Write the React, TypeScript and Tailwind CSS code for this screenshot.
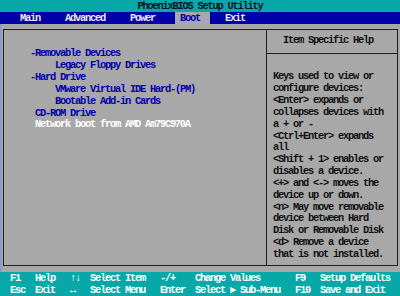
const mono = "font-['Liberation_Mono','DejaVu_Sans_Mono',monospace] font-bold text-[10.4px] tracking-[-1.24px]";

// one text-mode cell row
function Line({ children, className = "" }: { children: React.ReactNode; className?: string }) {
  return <div className={`h-[11.84px] flex items-center ${className}`}>{children}</div>;
}

const tabs = [
  { label: "Main", ml: "ml-[20px]" },
  { label: "Advanced", ml: "ml-[25px]" },
  { label: "Power", ml: "ml-[25px]" },
];

const bootItems = [
  { text: "-Removable Devices", indent: "pl-0", color: "text-[#0000a8]" },
  { text: "Legacy Floppy Drives", indent: "pl-[25px]", color: "text-[#0000a8]" },
  { text: "-Hard Drive", indent: "pl-0", color: "text-[#0000a8]" },
  { text: "VMware Virtual IDE Hard-(PM)", indent: "pl-[25px]", color: "text-[#0000a8]" },
  { text: "Bootable Add-in Cards", indent: "pl-[25px]", color: "text-[#0000a8]" },
  { text: "CD-ROM Drive", indent: "pl-[5px]", color: "text-[#0000a8]" },
  { text: "Network boot from AMD Am79C970A", indent: "pl-[5px]", color: "text-white" },
];

const helpLines = [
  "Keys used to view or",
  "configure devices:",
  "<Enter> expands or",
  "collapses devices with",
  "a + or -",
  "<Ctrl+Enter> expands",
  "all",
  "<Shift + 1> enables or",
  "disables a device.",
  "<+> and <-> moves the",
  "device up or down.",
  "<n> May move removable",
  "device between Hard",
  "Disk or Removable Disk",
  "<d> Remove a device",
  "that is not installed.",
];

const footer = [
  ["F1", "Help", "↑↓", "Select Item", "-/+", "Change Values", "F9", "Setup Defaults"],
  ["Esc", "Exit", "↔", "Select Menu", "Enter", "Select ► Sub-Menu", "F10", "Save and Exit"],
];

function App() {
  return (
    <div className={`w-[400px] h-[296px] flex flex-col overflow-hidden whitespace-pre leading-[11px] ${mono}`}>
      <div className="h-[12px] bg-[#08a8a8] text-[#10102a] flex justify-center">
        <Line className="h-[12px]">PhoenixBIOS Setup Utility</Line>
      </div>

      <div className="h-[12px] bg-[#0000a8] flex items-stretch text-[#e8e8f0]">
        {tabs.map((t) => (
          <Line key={t.label} className={`h-[12px] ${t.ml}`}>
            {t.label}
          </Line>
        ))}
        <Line className="ml-[20px] w-[35px] h-[12px] pl-[5px] bg-[#a8a8a8] text-[#0000a8]">Boot</Line>
        <Line className="ml-[15px] h-[12px]">Exit</Line>
      </div>

      <div className="h-[248px] bg-[#a8a8a8] border-l-2 border-[#8c9cc4] pl-[1px] pr-[2px] pt-[5px] pb-[6px]">
        <div className="h-full border border-[#202020] flex">
          <div className="w-[263px] border-r border-[#202020] pt-[18px] pl-[26px]">
            {bootItems.map((b) => (
              <Line key={b.text} className={`${b.indent} ${b.color}`}>
                {b.text}
              </Line>
            ))}
          </div>
          <div className="flex-1 flex flex-col text-[#101010]">
            <div className="h-[24px] border-b border-[#202020] pt-[5px] pl-[16px]">
              <Line>Item Specific Help</Line>
            </div>
            <div className="pt-[17px] pl-[6px]">
              {helpLines.map((l) => (
                <Line key={l}>{l}</Line>
              ))}
            </div>
          </div>
        </div>
      </div>

      <div className="h-[24px] bg-[#08a8a8] text-white pl-[10px] grid grid-cols-[25px_35px_20px_70px_35px_100px_25px_1fr] grid-rows-[12px_12px]">
        {footer.flat().map((c, i) => (
          <Line key={i} className="h-[12px]">
            {c}
          </Line>
        ))}
      </div>
    </div>
  );
}

export default App;
